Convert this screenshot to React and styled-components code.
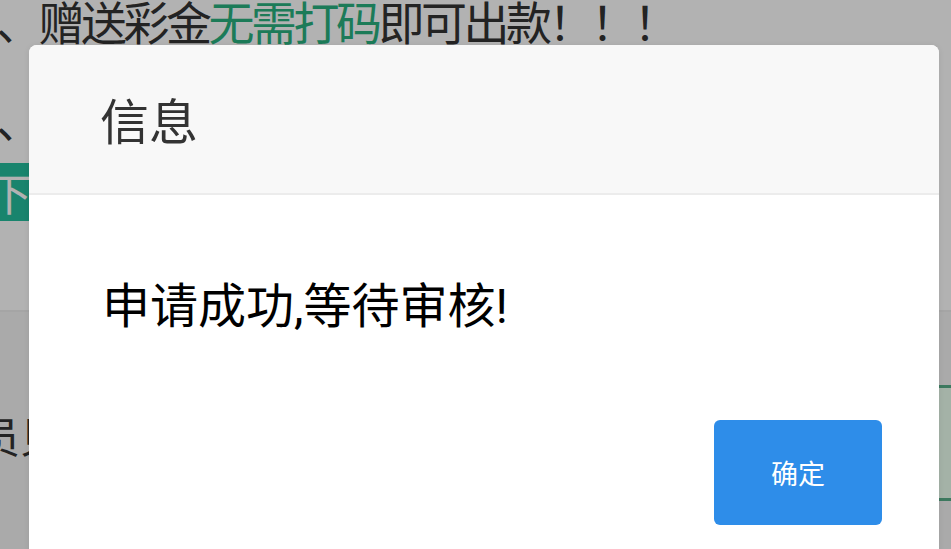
import styled, { createGlobalStyle } from 'styled-components';

const GlobalStyle = createGlobalStyle`
  html, body {
    margin: 0;
    padding: 0;
    width: 951px;
    height: 549px;
    overflow: hidden;
    background: #fff;
  }
  body {
    font-family: "Noto Sans CJK SC", "Noto Sans", sans-serif;
  }
`;

const Page = styled.div`
  position: relative;
  width: 951px;
  height: 549px;
  overflow: hidden;
  background: #fff;
  color: #333;
`;

const Notice = styled.div`
  height: 310px;
  overflow: hidden;
  background: #fff;
`;

const NoticeLine = styled.p`
  margin: ${(p) => p.$top}px 0 0 -4px;
  font-size: 46px;
  line-height: 50px;
  letter-spacing: -3.5px;
  white-space: nowrap;
  overflow: hidden;
`;

const Green = styled.span`
  color: #29b17f;
`;

const DownloadBtn = styled.div`
  margin: 20px 0 0 -12px;
  width: 260px;
  height: 58px;
  background: #25bd9c;
  color: #fff;
  font-size: 44px;
  line-height: 58px;
`;

const Section = styled.div`
  height: 239px;
  background: #f4f4f4;
  border-top: 2px solid #ececec;
  display: flex;
  justify-content: space-between;
  align-items: flex-start;
`;

const RuleLabel = styled.div`
  margin: 98px 0 0 -22px;
  font-size: 42px;
  line-height: 50px;
`;

const RuleBox = styled.div`
  margin-top: 73px;
  width: 140px;
  height: 110px;
  background: #ebfff0;
  border-top: 3px solid #58ae88;
  border-bottom: 3px solid #58ae88;
  box-shadow: 0 39px 0 -36px #58ae88;
`;

const Overlay = styled.div`
  position: absolute;
  inset: 0;
  background: rgba(0, 0, 0, 0.3);
`;

const Dialog = styled.div`
  position: absolute;
  left: 29px;
  top: 45px;
  width: 910px;
  height: 560px;
  background: #fff;
  border-radius: 8px;
  overflow: hidden;
  display: flex;
  flex-direction: column;
  box-shadow: 0 1px 6px rgba(0, 0, 0, 0.08);
`;

const DialogHeader = styled.div`
  height: 148px;
  flex-shrink: 0;
  display: flex;
  align-items: center;
  padding: 0 0 0 71px;
  background: #f8f8f8;
  border-bottom: 2px solid #ececec;
  font-size: 49px;
  color: #333;
`;

const Title = styled.span`
  margin-top: -2px;
`;

const DialogBody = styled.div`
  padding: 82px 72px 0 73px;
  font-size: 48px;
  line-height: 60px;
  color: #000;
  font-family: "Roboto", "Noto Sans CJK SC", sans-serif;
`;

const DialogFooter = styled.div`
  display: flex;
  justify-content: flex-end;
  padding: 83px 57px 0 0;
`;

const ConfirmBtn = styled.button`
  width: 168px;
  height: 105px;
  border: none;
  border-radius: 6px;
  background: #2e8de9;
  color: #fff;
  font-family: "Noto Sans CJK SC", sans-serif;
  font-size: 27px;
  padding: 0;
  cursor: pointer;
`;

export default function App() {
  return (
    <>
      <GlobalStyle />
      <Page>
        <Notice>
          <NoticeLine $top={-5}>
            、赠送彩金<Green>无需打码</Green>即可出款！！！
          </NoticeLine>
          <NoticeLine $top={48}>
            、充值成功后请联系在线客服领取彩金即可丁
          </NoticeLine>
          <DownloadBtn>下载APP</DownloadBtn>
        </Notice>
        <Section>
          <RuleLabel>员贝</RuleLabel>
          <RuleBox />
        </Section>
        <Overlay />
        <Dialog>
          <DialogHeader>
            <Title>信息</Title>
          </DialogHeader>
          <DialogBody>申请成功,等待审核!</DialogBody>
          <DialogFooter>
            <ConfirmBtn>确定</ConfirmBtn>
          </DialogFooter>
        </Dialog>
      </Page>
    </>
  );
}
